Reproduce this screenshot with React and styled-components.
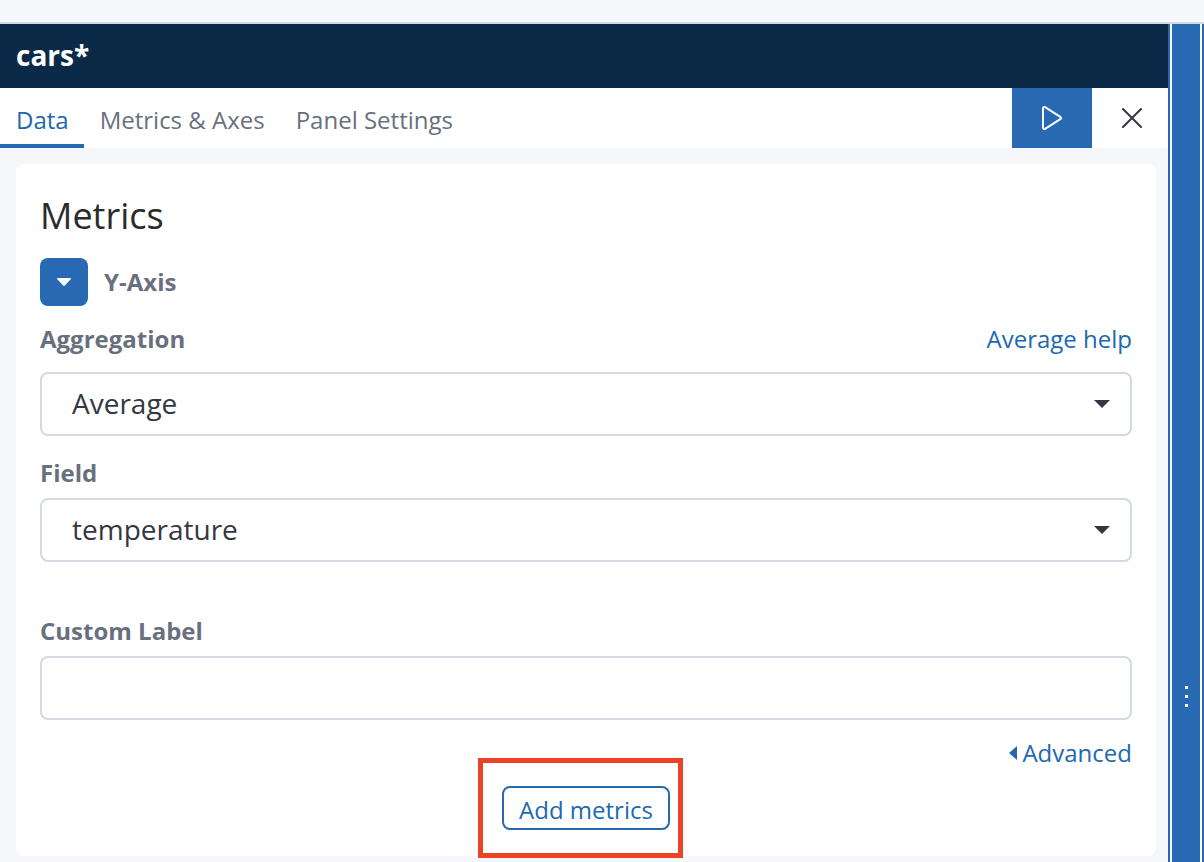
import React from "react";
import styled, { createGlobalStyle } from "styled-components";

const blue = "#276ab3";
const linkBlue = "#2069b0";
const pale = "#f5f7fb";
const line = "#d3dae6";
const slate = "#69707d";
const ink = "#343741";

const GlobalStyle = createGlobalStyle`
  *, *::before, *::after { box-sizing: border-box; }
  body {
    margin: 0;
    background: ${pale};
    font-family: "Open Sans", "Noto Sans", sans-serif;
    font-size: 24px;
    line-height: 34px;
    color: ${ink};
  }
  button, input, select { font: inherit; margin: 0; }
`;

const Page = styled.div`
  min-height: 100vh;
  display: flex;
  flex-direction: column;
`;

const TopStrip = styled.div`
  height: 24px;
  border-bottom: 2px solid ${line};
`;

const Workspace = styled.div`
  flex: 1;
  display: flex;
`;

const Editor = styled.section`
  flex: 1;
  min-width: 0;
`;

const TitleBar = styled.header`
  height: 64px;
  padding: 0 16px;
  background: #0b2a47;
`;

const IndexTitle = styled.h1`
  margin: 0;
  font-size: 28px;
  line-height: 62px;
  font-weight: 700;
  color: #fff;
`;

const TabBar = styled.div`
  display: flex;
  height: 60px;
  background: #fff;
`;

const Tabs = styled.nav`
  flex: 1;
  display: flex;
`;

const Tab = styled.button`
  padding: 8px 15px 0 16px;
  border: 0;
  border-bottom: 4px solid ${(p) => (p.$active ? blue : "transparent")};
  background: none;
  color: ${(p) => (p.$active ? linkBlue : slate)};
  white-space: nowrap;
`;

const BarButton = styled.button`
  display: flex;
  align-items: center;
  justify-content: center;
  padding: ${(p) => (p.$primary ? "0 28px" : "0 25px 0 29px")};
  border: 0;
  background: ${(p) => (p.$primary ? blue : "#fff")};
  color: ${(p) => (p.$primary ? "#fff" : ink)};
`;

const Card = styled.form`
  display: flex;
  flex-direction: column;
  margin: 16px 12px 6px 16px;
  padding: 24px 24px 26px;
  border-radius: 8px;
  background: #fff;
`;

const CardTitle = styled.h2`
  margin: 0 0 14px;
  font-size: 36px;
  line-height: 56px;
  font-weight: 400;
  color: #2b2b2b;
`;

const AxisRow = styled.div`
  display: flex;
  align-items: center;
  gap: 16px;
  margin-bottom: 16px;
  font-weight: 700;
  color: ${slate};
`;

const ToggleButton = styled.button`
  display: flex;
  align-items: center;
  justify-content: center;
  width: 48px;
  height: 48px;
  padding: 0;
  border: 0;
  border-radius: 8px;
  background: ${blue};
  color: #fff;
`;

const Field = styled.div`
  display: flex;
  flex-direction: column;
  gap: ${(p) => p.$gap || 8}px;
  margin-bottom: ${(p) => p.$after}px;
`;

const LabelRow = styled.div`
  display: flex;
  justify-content: space-between;
`;

const Label = styled.label`
  font-weight: 700;
  color: ${slate};
`;

const TextLink = styled.a`
  display: flex;
  align-items: center;
  gap: 5px;
  align-self: ${(p) => (p.$end ? "flex-end" : "auto")};
  color: ${linkBlue};
  text-decoration: none;
`;

const SelectBox = styled.div`
  display: grid;
  align-items: center;
  > * { grid-area: 1 / 1; }
  > svg {
    justify-self: end;
    margin-right: 22px;
    pointer-events: none;
  }
`;

const controlStyle = `
  width: 100%;
  height: 64px;
  padding: 0 30px 2px;
  border: 2px solid ${line};
  border-radius: 8px;
  background: #fff;
  color: ${ink};
`;

const Select = styled.select`
  ${controlStyle}
  font-size: 28px;
  line-height: 38px;
  appearance: none;
`;

const TextInput = styled.input`
  ${controlStyle}
  font-size: 28px;
`;

const Actions = styled.div`
  display: flex;
  justify-content: center;
  margin-top: 16px;
`;

const Highlighted = styled.div`
  position: relative;
  &::after {
    content: "";
    position: absolute;
    inset: -28px -13px -28px -24px;
    border: 5px solid #ec4225;
    pointer-events: none;
  }
`;

const OutlineButton = styled.button`
  display: block;
  height: 44px;
  padding: 4px 15px 0;
  border: 2px solid ${blue};
  border-radius: 8px;
  background: #fff;
  color: ${linkBlue};
`;

const Resizer = styled.button`
  display: flex;
  align-items: flex-end;
  justify-content: center;
  width: 36px;
  padding: 0 0 154px;
  border: solid ${blue};
  border-width: 0 2px;
  background: ${blue};
  box-shadow: inset 2px 0 #fff, inset -2px 0 #fff;
`;

function Caret({ width = 16, height = 8, points = "0,0 16,0 8,8" }) {
  return (
    <svg width={width} height={height} viewBox={`0 0 ${width} ${height}`} aria-hidden="true">
      <polygon points={points} fill="currentColor" />
    </svg>
  );
}

function SelectField({ id, label, value, help, gap, after }) {
  return (
    <Field $gap={gap} $after={after}>
      <LabelRow>
        <Label htmlFor={id}>{label}</Label>
        {help && <TextLink href="#help">{help}</TextLink>}
      </LabelRow>
      <SelectBox>
        <Select id={id} defaultValue={value}>
          <option>{value}</option>
        </Select>
        <Caret />
      </SelectBox>
    </Field>
  );
}

export default function App() {
  return (
    <>
      <GlobalStyle />
      <Page>
        <TopStrip />
        <Workspace>
          <Editor>
            <TitleBar>
              <IndexTitle>cars*</IndexTitle>
            </TitleBar>
            <TabBar>
              <Tabs>
                <Tab type="button" $active>Data</Tab>
                <Tab type="button">Metrics &amp; Axes</Tab>
                <Tab type="button">Panel Settings</Tab>
              </Tabs>
              <BarButton type="button" $primary aria-label="Apply changes">
                <svg width="24" height="26" viewBox="0 0 24 26" fill="none" stroke="currentColor" strokeWidth="2" strokeLinejoin="round">
                  <path d="M3 3.400v19.200c0 1.200 1.100 1.800 2.100 1.200l15.200-9.600c1-.6 1-1.800 0-2.400L5.100 2.200C4.100 1.600 3 2.200 3 3.400z" />
                </svg>
              </BarButton>
              <BarButton type="button" aria-label="Discard changes">
                <svg width="22" height="22" viewBox="0 0 22 22" fill="none" stroke="currentColor" strokeWidth="2" strokeLinecap="round">
                  <path d="M2 2l18 18M20 2L2 20" />
                </svg>
              </BarButton>
            </TabBar>
            <Card>
              <CardTitle>Metrics</CardTitle>
              <AxisRow>
                <ToggleButton type="button" aria-label="Toggle Y-Axis editor">
                  <svg width="14" height="8" viewBox="0 0 14 8" aria-hidden="true">
                    <path d="M.8 0h12.400c.8 0 1.100.8.5 1.300L7.800 7.500c-.4.5-1.200.5-1.600 0L.3 1.300C-.3.8 0 0 .8 0z" fill="currentColor" />
                  </svg>
                </ToggleButton>
                <span>Y-Axis</span>
              </AxisRow>
              <SelectField id="aggregation" label="Aggregation" value="Average" help="Average help" gap={16} after={20} />
              <SelectField id="field" label="Field" value="temperature" after={52} />
              <Field $after={16}>
                <Label htmlFor="custom-label">Custom Label</Label>
                <TextInput id="custom-label" type="text" />
              </Field>
              <TextLink href="#advanced" $end>
                <Caret width={8} height={14} points="8,0 8,14 0,7" />
                Advanced
              </TextLink>
              <Actions>
                <Highlighted>
                  <OutlineButton type="button">Add metrics</OutlineButton>
                </Highlighted>
              </Actions>
            </Card>
          </Editor>
          <Resizer type="button" aria-label="Resize panel">
            <svg width="4" height="22" viewBox="0 0 4 22" fill="#fff" aria-hidden="true">
              <rect width="3" height="3" x="1" />
              <rect width="3" height="3" x="1" y="9" />
              <rect width="3" height="3" x="1" y="18" />
            </svg>
          </Resizer>
        </Workspace>
      </Page>
    </>
  );
}
